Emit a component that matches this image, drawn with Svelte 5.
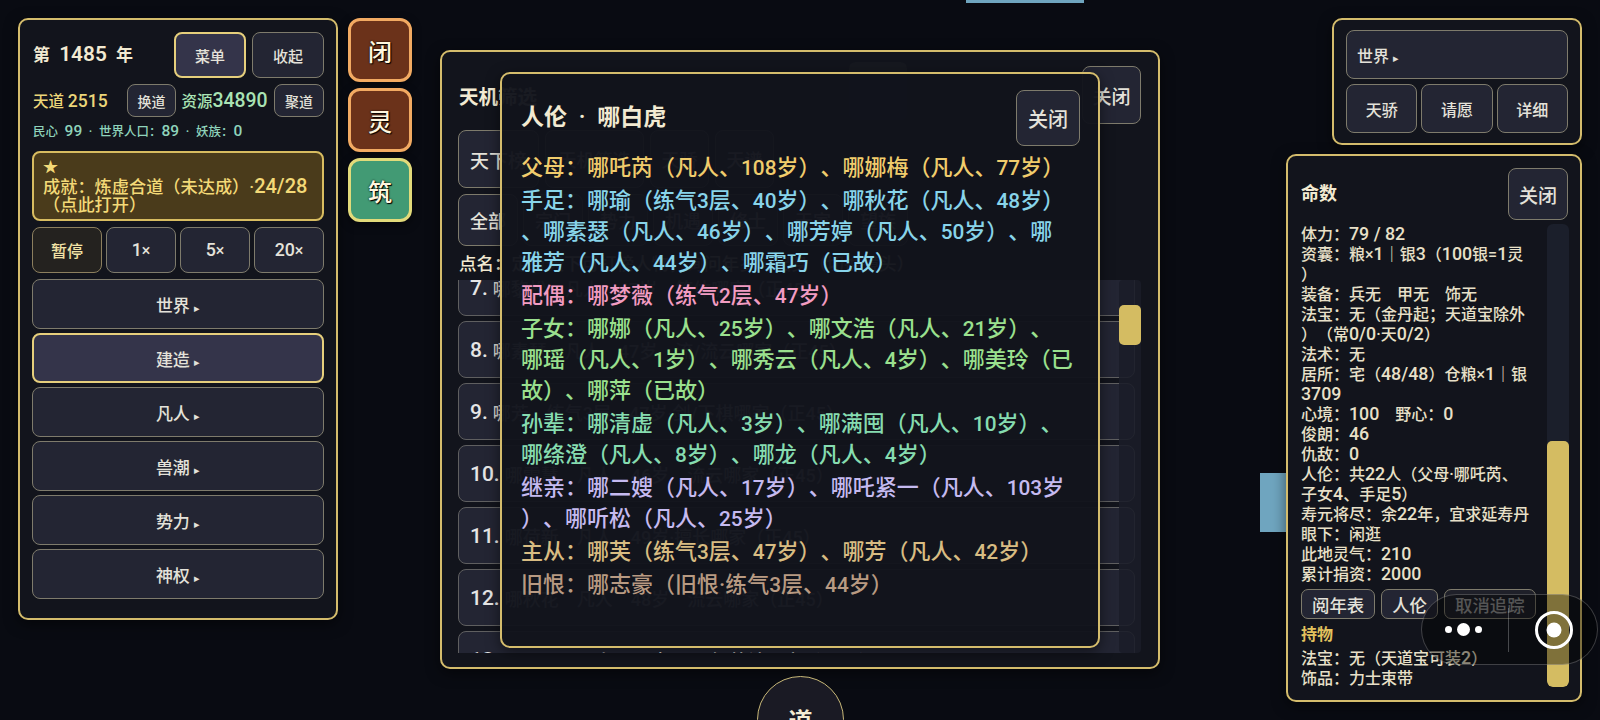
<script>
  const speeds = ['1×', '5×', '20×'];
  const menus = ['世界', '建造', '凡人', '兽潮', '势力', '神权'];
  const sideTabs = [
    { label: '闭', green: false },
    { label: '灵', green: false },
    { label: '筑', green: true }
  ];

  const filters = ['全部', '宗门', '势力', '机遇', '修士', '天家', '望族'];
  const rankList = [
    { no: 7, text: '哪黎松　凡人　47岁　筑体哪家（正45）' },
    { no: 8, text: '哪素瑟　凡人　47岁　流/流云哪家（正45）' },
    { no: 9, text: '哪芳　练气3层　47岁·剑/下棋哪家（正45）' },
    { no: 10, text: '哪雪慧　凡人　46岁　流云哪家（正45）' },
    { no: 11, text: '哪荷新　凡人　49岁·擅长哪家（正45）' },
    { no: 12, text: '哪秋花　凡人　48岁　流云哪家（正45）' },
    { no: 13, text: '哪夏丽　凡人　48岁　三农/笑法哪家（正45）' }
  ];

  const relations = [
    { kind: 'parent', text: '父母：哪吒芮（凡人、108岁）、哪娜梅（凡人、77岁）' },
    { kind: 'sibling', text: '手足：哪瑜（练气3层、40岁）、哪秋花（凡人、48岁）、哪素瑟（凡人、46岁）、哪芳婷（凡人、50岁）、哪雅芳（凡人、44岁）、哪霜巧（已故）' },
    { kind: 'spouse', text: '配偶：哪梦薇（练气2层、47岁）' },
    { kind: 'child', text: '子女：哪娜（凡人、25岁）、哪文浩（凡人、21岁）、哪瑶（凡人、1岁）、哪秀云（凡人、4岁）、哪美玲（已故）、哪萍（已故）' },
    { kind: 'grandchild', text: '孙辈：哪清虚（凡人、3岁）、哪满囤（凡人、10岁）、哪绦澄（凡人、8岁）、哪龙（凡人、4岁）' },
    { kind: 'kin', text: '继亲：哪二嫂（凡人、17岁）、哪吒紧一（凡人、103岁）、哪听松（凡人、25岁）' },
    { kind: 'servant', text: '主从：哪芙（练气3层、47岁）、哪芳（凡人、42岁）' },
    { kind: 'grudge', text: '旧恨：哪志豪（旧恨·练气3层、44岁）' }
  ];

  const fateLines = [
    '体力：79 / 82',
    '资囊：粮×1｜银3（100银=1灵）',
    '装备：兵无　甲无　饰无',
    '法宝：无（金丹起；天道宝除外）（常0/0·天0/2）',
    '法术：无',
    '居所：宅（48/48）仓粮×1｜银3709',
    '心境：100　野心：0',
    '俊朗：46',
    '仇敌：0',
    '人伦：共22人（父母·哪吒芮、子女4、手足5）',
    '寿元将尽：余22年，宜求延寿丹',
    '眼下：闲逛',
    '此地灵气：210',
    '累计捐资：2000'
  ];

  // numbers render larger than the CJK around them and must not break mid-number
  function parts(text) {
    return text.split(/(\d[\d/ ]*\d|\d)/).filter(Boolean).map((t) => ({ t, num: /^\d/.test(t) }));
  }
</script>

{#snippet rich(text)}{#each parts(text) as p}{#if p.num}<span class="num">{p.t}</span>{:else}{p.t}{/if}{/each}{/snippet}

<div class="stage">
  <div class="top-strip"></div>
  <div class="side-strip"></div>

  <!-- left control panel -->
  <section class="panel left">
    <div class="year-row">
      <span class="year">第 <span class="num">1485</span> 年</span>
      <button class="btn head-btn on">菜单</button>
      <button class="btn head-btn">收起</button>
    </div>
    <div class="res-row">
      <span class="dao">天道 <span class="num">2515</span></span>
      <button class="btn res-btn">换道</button>
      <span class="res">资源<span class="num">34890</span></span>
      <button class="btn res-btn">聚道</button>
    </div>
    <div class="people">{@render rich('民心 99 · 世界人口：89 · 妖族：0')}</div>
    <button class="goal">
      <span class="star">★</span>
      <span>{@render rich('成就：炼虚合道（未达成）·24/28')}</span>
      <span>（点此打开）</span>
    </button>
    <div class="speed-row">
      <button class="btn speed pause">暂停</button>
      {#each speeds as s}
        <button class="btn speed">{@render rich(s)}</button>
      {/each}
    </div>
    <div class="menu-list">
      {#each menus as m}
        <button class="btn menu-item" class:on={m === '建造'}>{m} <i>▸</i></button>
      {/each}
    </div>
  </section>

  <div class="side-tabs">
    {#each sideTabs as t}
      <button class="side-tab" class:green={t.green}>{t.label}</button>
    {/each}
  </div>

  <!-- ranking panel, mostly hidden by the dialog -->
  <section class="panel rank">
    <div class="rank-head">
      <h2>天机筛选</h2>
      <button class="btn close-back">关闭</button>
    </div>
    <div class="tab-row">
      <button class="btn tab t1">天下榜</button>
      <button class="btn tab t2">天机筛选</button>
      <button class="btn tab t3">天骄</button>
      <button class="btn tab t3">天谱</button>
    </div>
    <div class="filter-row">
      {#each filters as f}
        <button class="btn filter">{f}</button>
      {/each}
    </div>
    <div class="rank-note">点名：定位天下可打榜人物，询问年岁与出身（切换镜头）</div>
    <div class="rank-scroll">
      <div class="rank-list">
        {#each rankList as r}
          <div class="rank-item"><span class="no">{r.no}.</span> {r.text}</div>
        {/each}
      </div>
      <div class="track"><div class="thumb"></div></div>
    </div>
    <div class="ghost"></div>
  </section>

  <!-- relations dialog -->
  <section class="panel dialog">
    <div class="dialog-head">
      <h2>人伦 · 哪白虎</h2>
      <button class="btn close-front">关闭</button>
    </div>
    <div class="relations">
      {#each relations as r}
        <p class={r.kind}>{@render rich(r.text)}</p>
      {/each}
    </div>
  </section>

  <section class="panel world">
    <button class="btn world-btn">世界 <i>▸</i></button>
    <div class="world-row">
      <button class="btn world-small">天骄</button>
      <button class="btn world-small">请愿</button>
      <button class="btn world-small">详细</button>
    </div>
  </section>

  <!-- character panel -->
  <section class="panel fate">
    <div class="fate-head">
      <h3>命数</h3>
      <button class="btn fate-close">关闭</button>
    </div>
    <div class="fate-body">
      <div class="fate-text">
        {#each fateLines as line}
          <div>{@render rich(line)}</div>
        {/each}
        <div class="fate-actions">
          <button class="btn act">阅年表</button>
          <button class="btn act">人伦</button>
          <button class="btn act muted">取消追踪</button>
        </div>
        <div class="hold">持物</div>
        <div>{@render rich('法宝：无（天道宝可装2）')}</div>
        <div>饰品：力士束带</div>
      </div>
      <div class="fate-track"><div class="fate-thumb"></div></div>
    </div>
  </section>

  <button class="dao-orb">道</button>

  <div class="capsule">
    <div class="dots"><span></span><span class="big"></span><span></span></div>
    <div class="sep"></div>
    <svg class="record" width="40" height="40" viewBox="0 0 40 40" aria-hidden="true">
      <circle cx="20" cy="20" r="17.5" fill="none" stroke="#fff" stroke-width="3" />
      <circle cx="20" cy="20" r="7.5" fill="#fff" />
    </svg>
  </div>
</div>

<style>
  :global(body) {
    background: #090b12;
  }

  .stage {
    position: relative;
    width: 1600px;
    height: 720px;
    overflow: hidden;
    background: #090b12;
    color: #e8e0c8;
    font-family: Roboto, "Noto Sans CJK SC", sans-serif;
    font-weight: 500;
    text-spacing-trim: space-all;
  }

  button {
    font-family: inherit;
    font-weight: 500;
    padding: 0;
    text-spacing-trim: space-all;
  }

  h2, h3, p {
    margin: 0;
  }

  i {
    font-style: normal;
    font-size: 11px;
  }

  .num {
    display: inline-block;
    line-height: 1;
  }

  .top-strip {
    position: absolute;
    left: 966px;
    top: 0;
    width: 118px;
    height: 3px;
    background: #6fa5bf;
  }

  .side-strip {
    position: absolute;
    left: 1260px;
    top: 473px;
    width: 30px;
    height: 59px;
    background: #6fa5bf;
  }

  .panel {
    position: absolute;
    box-sizing: border-box;
    background: #12141c;
    border: 2px solid #d4bc6c;
    border-radius: 10px;
    box-shadow: 0 4px 14px rgba(0, 0, 0, 0.5);
  }

  .btn {
    box-sizing: border-box;
    background: #232533;
    border: 1px solid #7e7b6c;
    border-radius: 8px;
    color: #e4e2da;
  }

  .btn.on {
    background: #34344a;
    border: 2px solid #e6cf7c;
  }

  /* left panel */
  .left {
    left: 18px;
    top: 18px;
    width: 320px;
    height: 602px;
    padding: 12px;
    display: flex;
    flex-direction: column;
  }

  .year-row {
    display: flex;
    align-items: center;
    gap: 6px;
    height: 46px;
  }

  .year {
    flex: 1;
    padding: 0 0 3px 1px;
    font-size: 17px;
    font-weight: 600;
    color: #f2ead2;
    white-space: nowrap;
  }

  .year .num {
    margin: 0 5px;
    font-size: 20.8px;
  }

  .head-btn {
    width: 72px;
    height: 46px;
    font-size: 15px;
  }

  .res-row {
    display: flex;
    align-items: center;
    height: 33px;
    margin-top: 6px;
    font-size: 15.5px;
  }

  .dao {
    width: 94px;
    padding: 0 0 1px 1px;
    color: #ecd679;
    white-space: nowrap;
  }

  .dao .num {
    font-size: 17.5px;
  }

  .res-btn {
    width: 50px;
    height: 33px;
    font-size: 14px;
  }

  .res {
    width: 93px;
    padding: 0 0 1px 5px;
    box-sizing: border-box;
    margin-right: 5px;
    color: #a9e3b4;
    white-space: nowrap;
  }

  .res .num {
    font-size: 19.4px;
  }

  .people {
    margin-top: 3px;
    padding-left: 1px;
    font-size: 12.5px;
    line-height: 24px;
    word-spacing: 3.5px;
    color: #8fd3bb;
    white-space: nowrap;
  }

  .people .num {
    font-size: 15.5px;
  }

  .goal {
    box-sizing: border-box;
    display: flex;
    flex-direction: column;
    align-items: flex-start;
    width: 292px;
    height: 70px;
    margin-top: 7px;
    padding: 6px 9px;
    background: #4a3b1b;
    border: 2px solid #d8bc60;
    border-radius: 8px;
    color: #f3d977;
    font-size: 17.2px;
    line-height: 18px;
    text-align: left;
    white-space: nowrap;
  }

  .goal .num {
    font-size: 20px;
  }

  .star {
    font-size: 15px;
    line-height: 17px;
  }

  .speed-row {
    display: grid;
    grid-template-columns: repeat(4, 1fr);
    gap: 4px;
    margin-top: 6px;
  }

  .speed {
    height: 46px;
    font-size: 16px;
  }

  .speed .num {
    font-size: 17.8px;
  }

  .pause {
    background: #24221f;
    border-color: #8c7f5e;
    color: #f2e3a6;
  }

  .menu-list {
    display: flex;
    flex-direction: column;
    gap: 4px;
    margin-top: 6px;
  }

  .menu-item {
    height: 50px;
    font-size: 17px;
  }

  /* side tabs */
  .side-tabs {
    position: absolute;
    left: 348px;
    top: 18px;
    display: flex;
    flex-direction: column;
    gap: 6px;
  }

  .side-tab {
    box-sizing: border-box;
    width: 64px;
    height: 64px;
    background: #6b321a;
    border: 3px solid #f2aa62;
    border-radius: 12px;
    color: #fff6de;
    font-size: 24px;
    text-shadow: 0 0 2px #000, 1px 1px 1px #000;
    box-shadow: 0 3px 8px rgba(0, 0, 0, 0.5);
  }

  .side-tab.green {
    background: #429a74;
    border-color: #e2da7a;
  }

  /* ranking panel */
  .rank {
    left: 440px;
    top: 50px;
    width: 720px;
    height: 619px;
    padding: 14px 17px 14px 16px;
    display: flex;
    flex-direction: column;
  }

  .rank-head {
    display: flex;
    align-items: center;
    justify-content: space-between;
    height: 58px;
    padding-left: 1px;
  }

  .rank-head h2 {
    font-size: 19.5px;
    font-weight: 600;
    color: #f2ead2;
  }

  .close-back {
    width: 59px;
    height: 58px;
    font-size: 19px;
  }

  .tab-row {
    display: flex;
    gap: 6px;
    margin-top: 6px;
  }

  .tab {
    height: 58px;
    font-size: 18px;
  }

  .t1 {
    width: 81px;
    font-size: 19px;
  }

  .t2 {
    width: 99px;
  }

  .t3 {
    width: 59px;
  }

  .filter-row {
    display: flex;
    gap: 5px;
    margin-top: 6px;
  }

  .filter {
    width: 60px;
    height: 52px;
    font-size: 18px;
  }

  .rank-note {
    margin-top: 3px;
    padding-left: 1px;
    font-size: 17.5px;
    line-height: 31px;
    color: #f2ead2;
    white-space: nowrap;
  }

  .rank-scroll {
    position: relative;
    flex: 1;
    overflow: hidden;
  }

  .rank-list {
    display: flex;
    flex-direction: column;
    gap: 5px;
    margin-top: -21px;
  }

  .rank-item {
    box-sizing: border-box;
    display: flex;
    align-items: center;
    gap: 5px;
    width: 677px;
    height: 57px;
    flex: none;
    padding-left: 11px;
    background: #232533;
    border: 1px solid #5f5f60;
    border-radius: 8px;
    font-size: 18px;
    color: #d8d6d0;
    white-space: nowrap;
  }

  .no {
    font-size: 21px;
    color: #e6e6e6;
  }

  .track {
    position: absolute;
    right: 0;
    top: 0;
    bottom: 0;
    width: 22px;
    background: rgba(26, 29, 40, 0.88);
    border-radius: 4px;
  }

  .thumb {
    width: 100%;
    height: 40px;
    margin-top: 25px;
    background: #d4bc62;
    border-radius: 5px;
  }

  .ghost {
    position: absolute;
    left: 407px;
    top: 10px;
    width: 58px;
    height: 58px;
    background: #16181f;
    border-radius: 6px;
  }

  /* relations dialog */
  .dialog {
    left: 500px;
    top: 72px;
    width: 600px;
    height: 576px;
    padding: 16px 18px 0 19px;
    background: rgba(18, 20, 28, 0.97);
  }

  .dialog-head {
    display: flex;
    align-items: center;
    justify-content: space-between;
    height: 56px;
  }

  .dialog-head h2 {
    padding-bottom: 6px;
    font-size: 23px;
    font-weight: 600;
    word-spacing: 6px;
    color: #f2ead2;
  }

  .close-front {
    width: 64px;
    height: 56px;
    font-size: 20px;
  }

  .relations {
    width: 552px;
    margin-top: 6px;
    font-size: 22px;
    line-height: 31.3px;
    line-break: anywhere;
  }

  .relations p {
    margin-bottom: 1.4px;
  }

  .relations .num {
    font-size: 20.8px;
  }

  .parent { color: #f0cc6c; }
  .sibling { color: #88d4ea; }
  .spouse { color: #f29cc2; }
  .child { color: #9ae08e; }
  .grandchild { color: #86dcb0; }
  .kin { color: #c5baf0; }
  .servant { color: #d8bc82; }
  .grudge { color: #b89a82; }

  /* world panel */
  .world {
    left: 1332px;
    top: 18px;
    width: 250px;
    height: 127px;
    padding: 10px 12px;
    display: flex;
    flex-direction: column;
    gap: 5px;
  }

  .world-btn {
    height: 49px;
    padding-left: 10px;
    font-size: 16px;
    text-align: left;
  }

  .world-row {
    display: grid;
    grid-template-columns: repeat(3, 1fr);
    gap: 4px;
  }

  .world-small {
    height: 49px;
    font-size: 16px;
  }

  /* character panel */
  .fate {
    left: 1286px;
    top: 154px;
    width: 296px;
    height: 548px;
    padding: 12px 12px 0 13px;
  }

  .fate-head {
    display: flex;
    align-items: center;
    justify-content: space-between;
    height: 52px;
  }

  .fate-head h3 {
    padding-bottom: 4px;
    font-size: 18px;
    font-weight: 600;
    color: #f2ead2;
  }

  .fate-close {
    width: 60px;
    height: 52px;
    font-size: 19px;
  }

  .fate-body {
    display: flex;
    gap: 14px;
    margin-top: 4px;
  }

  .fate-text {
    width: 232px;
    padding-top: 1px;
    font-size: 16px;
    line-height: 20px;
    line-break: anywhere;
    color: #e8e0c8;
  }

  .fate-text .num {
    font-size: 17.8px;
  }

  .fate-actions {
    display: flex;
    gap: 6px;
    margin-top: 4px;
  }

  .act {
    height: 30px;
    padding: 0 10px;
    font-size: 17.4px;
    border-radius: 7px;
    white-space: nowrap;
  }

  .muted {
    color: #8e8e8e;
    background: #1f2029;
  }

  .hold {
    margin-top: 6px;
    line-height: 20px;
    margin-bottom: 4px;
    font-weight: 600;
    color: #e2c25e;
  }

  .fate-track {
    flex: none;
    width: 22px;
    height: 463px;
    background: #1b1f2b;
    border-radius: 6px;
    overflow: hidden;
    display: flex;
    align-items: flex-end;
  }

  .fate-thumb {
    width: 100%;
    height: 246px;
    background: #d4bc62;
    border-radius: 5px;
  }

  /* bottom orb */
  .dao-orb {
    position: absolute;
    left: 757px;
    top: 676px;
    box-sizing: border-box;
    width: 87px;
    height: 87px;
    background: #1a1a24;
    border: 1.5px solid #c8b878;
    border-radius: 50%;
    color: #f4ecd4;
    font-size: 24px;
    font-weight: 600;
  }

  /* floating capsule */
  .capsule {
    position: absolute;
    left: 1421px;
    top: 594px;
    box-sizing: border-box;
    width: 177px;
    height: 71px;
    background: rgba(0, 0, 0, 0.4);
    border: 1px solid rgba(255, 255, 255, 0.22);
    border-radius: 36px;
    display: flex;
    align-items: center;
  }

  .dots {
    display: flex;
    align-items: center;
    gap: 5px;
    width: 82px;
    margin-right: 4px;
    justify-content: center;
  }

  .dots span {
    width: 7px;
    height: 7px;
    background: #fff;
    border-radius: 50%;
  }

  .dots span.big {
    width: 13px;
    height: 13px;
  }

  .sep {
    width: 1px;
    height: 44px;
    background: rgba(255, 255, 255, 0.25);
  }

  .record {
    margin-left: 25px;
  }
</style>
